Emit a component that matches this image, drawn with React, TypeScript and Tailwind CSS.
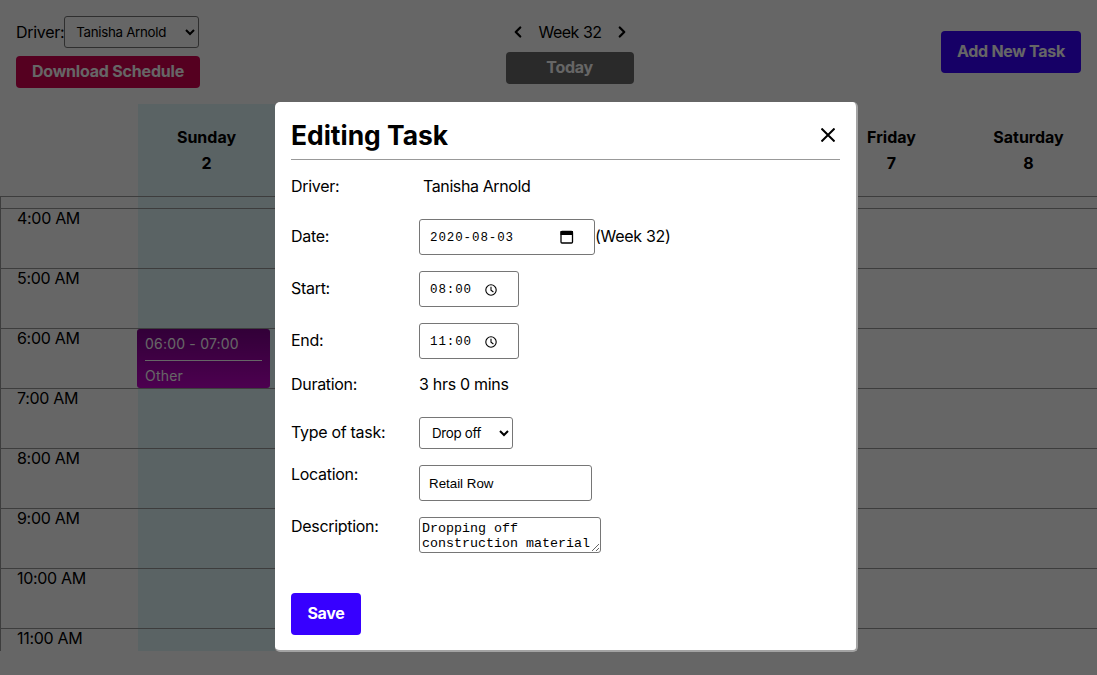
import { ChevronLeft, ChevronRight } from 'lucide-react';

// only the columns that show beside the modal carry a heading
const days = [
  { name: 'Sunday', date: '2' },
  { name: '', date: '' },
  { name: '', date: '' },
  { name: '', date: '' },
  { name: '', date: '' },
  { name: 'Friday', date: '7' },
  { name: 'Saturday', date: '8' },
];

const hours = ['4:00 AM', '5:00 AM', '6:00 AM', '7:00 AM', '8:00 AM', '9:00 AM', '10:00 AM', '11:00 AM'];

const fieldClass = 'h-9 rounded-[3px] border border-[#767676] bg-white text-black';
const pickerTextClass = "bg-transparent font-['Liberation_Mono',monospace] text-[12.5px] tracking-[0.9px] outline-none";

function CalendarIcon() {
  return (
    <svg width="14" height="14" viewBox="0 0 14 14" fill="none" stroke="black">
      <rect x="1" y="1.5" width="11.5" height="11.5" rx="1" strokeWidth="1.3" />
      <rect x="1" y="1.5" width="11.5" height="3" fill="black" strokeWidth="1" />
    </svg>
  );
}

function ClockIcon() {
  return (
    <svg width="12" height="12" viewBox="0 0 12 12" fill="none" stroke="black" strokeWidth="1.1">
      <circle cx="6" cy="6" r="5.2" />
      <path d="M6 2.8 V6.2 L8.4 8" />
    </svg>
  );
}

function TimeField({ value }: { value: string }) {
  return (
    <div className={`${fieldClass} flex w-[100px] items-center pl-[10px]`}>
      <input readOnly value={value} className={`${pickerTextClass} w-[42px] pt-[3px]`} />
      <span className="ml-[13px] mt-[1px]">
        <ClockIcon />
      </span>
    </div>
  );
}

function Calendar() {
  return (
    <div className="mt-4 h-[547px] overflow-hidden">
      <div className="grid h-[92px] grid-cols-[138px_repeat(7,137px)] tracking-normal">
        <div />
        {days.map((day, i) => (
          <div key={i} className={`pt-5 text-center font-bold leading-[26px] ${i === 0 ? 'bg-[#e1f7fb]' : ''}`}>
            <div>{day.name}</div>
            <div>{day.date}</div>
          </div>
        ))}
      </div>
      <div className="border-l border-[#999]">
        <div className="grid h-3 grid-cols-[137px_repeat(7,137px)] border-t border-[#999]">
          <div />
          <div className="bg-[#e1f7fb]" />
        </div>
        {hours.map((hour) => (
          <div key={hour} className="grid h-[60px] grid-cols-[137px_repeat(7,137px)] border-t border-[#999]">
            <div className="pl-4 leading-[19px]">{hour}</div>
            <div className="relative bg-[#e1f7fb]">
              {hour === '6:00 AM' && (
                <div className="absolute -left-px top-0 h-[59px] w-[133px] rounded-[3px] bg-gradient-to-b from-[#7d008c] to-[#c000c8] px-2 pt-[6px] text-sm tracking-[0.2px] text-white">
                  <div className="border-b border-white pb-[7px] leading-[18px]">06:00 - 07:00</div>
                  <div className="pt-[6px] leading-[18px]">Other</div>
                </div>
              )}
            </div>
          </div>
        ))}
      </div>
    </div>
  );
}

function Toolbar() {
  return (
    <div className="flex items-start justify-between px-4 pt-4">
      <div className="w-[184px]">
        <div className="flex items-center">
          <span>Driver:</span>
          <select defaultValue="Tanisha Arnold" className="h-8 w-[135px] rounded-[3px] border border-[#767676] pl-[7px] text-[13.33px]">
            <option>Tanisha Arnold</option>
          </select>
        </div>
        <button className="mt-2 h-8 w-[184px] rounded bg-[#d40052] pb-[2px] font-bold tracking-[-0.2px] text-white">Download Schedule</button>
      </div>
      <div className="-ml-[2px] flex w-[128px] flex-col items-center">
        <div className="flex h-8 items-center gap-[11px] pl-[1px]">
          <ChevronLeft size={18} strokeWidth={3} />
          <span className="tracking-[-0.5px]">Week 32</span>
          <ChevronRight size={18} strokeWidth={3} />
        </div>
        <button className="mt-1 h-8 w-[128px] rounded bg-[#696969] pb-[2px] font-bold text-white">Today</button>
      </div>
      <button className="mt-[15px] h-[42px] w-[140px] rounded bg-[#3700ff] pb-[2px] font-bold text-white">Add New Task</button>
    </div>
  );
}

function TaskModal() {
  return (
    <div className="fixed inset-0 bg-black/60">
      <div className="ml-[275px] mt-[102px] h-[550px] w-[583px] rounded-[5px] border-b-2 border-r-2 border-[#a3a3a3] bg-white px-4 pt-4 text-black">
        <div className="flex h-[42px] items-start justify-between border-b border-[#999]">
          <h2 className="-mt-px text-[26.4px] font-bold leading-9 tracking-normal">Editing Task</h2>
          <button className="mr-[5px] mt-[10px]">
            <svg width="14" height="14" viewBox="0 0 14 14" stroke="black" strokeWidth="2">
              <path d="M0.5 0.5 L13.5 13.5 M13.5 0.5 L0.5 13.5" />
            </svg>
          </button>
        </div>
        <div className="mt-4 flex h-5 items-center leading-5">
          <label className="w-32">Driver:</label>
          <span className="ml-1 tracking-[-0.4px]">Tanisha Arnold</span>
        </div>
        <div className="mt-[23px] flex items-center">
          <label className="w-32 pb-[2px]">Date:</label>
          <div className={`${fieldClass} flex w-44 items-center pl-[10px]`}>
            <input readOnly value="2020-08-03" className={`${pickerTextClass} w-[85px] pt-[3px]`} />
            <span className="ml-[45px]">
              <CalendarIcon />
            </span>
          </div>
          <span className="pb-[2px]">(Week 32)</span>
        </div>
        <div className="mt-4 flex items-center">
          <label className="w-32 pb-[2px]">Start:</label>
          <TimeField value="08:00" />
        </div>
        <div className="mt-4 flex items-center">
          <label className="w-32 pb-[2px]">End:</label>
          <TimeField value="11:00" />
        </div>
        <div className="mt-[15px] flex h-5 items-center leading-5">
          <label className="w-32">Duration:</label>
          <span>3 hrs 0 mins</span>
        </div>
        <div className="mt-[23px] flex items-center">
          <label className="w-32 pb-[2px]">Type of task:</label>
          <select defaultValue="Drop off" className="h-8 w-[94px] rounded-[3px] border border-[#767676] bg-white pl-2 text-[13.33px]">
            <option>Drop off</option>
          </select>
        </div>
        <div className="mt-4 flex items-start">
          <label className="w-32 leading-[19px]">Location:</label>
          <input type="text" defaultValue="Retail Row" className={`${fieldClass} w-[173px] px-[9px] font-['Liberation_Sans',sans-serif] text-[13.33px] tracking-normal`} />
        </div>
        <div className="mt-4 flex items-start">
          <label className="w-32 leading-[19px]">Description:</label>
          <textarea
            defaultValue={'Dropping off\nconstruction material'}
            className="h-9 w-[182px] rounded-[3px] border border-[#767676] px-[2px] pt-[3px] font-['Liberation_Mono',monospace] text-[13.33px] leading-[15px] tracking-normal"
          />
        </div>
        <button className="mt-10 h-[42px] w-[70px] rounded bg-[#3700ff] pb-[2px] font-bold text-white">Save</button>
      </div>
    </div>
  );
}

export default function App() {
  return (
    <div className="h-[675px] w-[1097px] overflow-hidden bg-white font-['Inter',sans-serif] tracking-[-0.3px] text-black">
      <Toolbar />
      <Calendar />
      <TaskModal />
    </div>
  );
}
